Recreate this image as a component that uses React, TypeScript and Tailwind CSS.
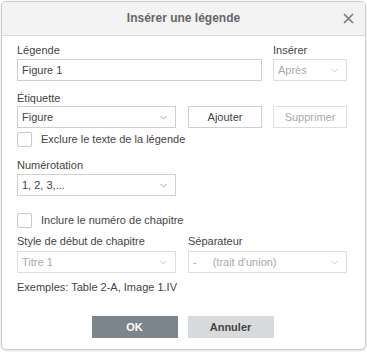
import React from "react";

const font = { fontFamily: '"Liberation Sans", Arial, sans-serif' };

function Chevron({ disabled }: { disabled?: boolean }) {
  return (
    <svg width="7" height="5" viewBox="0 0 7 5" className="shrink-0">
      <path d="M0.5 1 L3.5 4 L6.5 1" fill="none" stroke={disabled ? "#c4c4c4" : "#9a9a9a"} strokeWidth="0.9" />
    </svg>
  );
}

function Select({ value, width, disabled }: { value: React.ReactNode; width: string; disabled?: boolean }) {
  return (
    <div
      className={`${width} flex h-[22px] items-center justify-between border pl-[4px] pr-[8px] ${
        disabled ? "border-[#dedede] text-[#a9a9a9]" : "border-[#cfcfcf] text-[#444]"
      }`}
    >
      <span>{value}</span>
      <Chevron disabled={disabled} />
    </div>
  );
}

function Checkbox({ label }: { label: string }) {
  return (
    <label className="flex h-[15px] items-center gap-[9px]">
      <span className="h-[15px] w-[15px] rounded-[2px] border border-[#c8c8c8] bg-white" />
      <span>{label}</span>
    </label>
  );
}

export default function App() {
  return (
    <div className="h-[352px] w-[367px] bg-white p-px" style={font}>
      <div className="flex h-[349px] w-[365px] flex-col overflow-hidden rounded-[5px] border border-[#cbcbcb] bg-white text-[11px] leading-[13px] text-[#444] shadow-[0_1px_3px_rgba(0,0,0,0.12)]">
        <div className="relative flex h-[34px] shrink-0 items-center justify-center border-b border-[#dadada] bg-[#f3f3f3]">
          <span className="text-[12px] font-bold text-[#666]">Insérer une légende</span>
          <svg width="11" height="11" viewBox="0 0 11 11" className="absolute right-[11px] top-[11px]">
            <path d="M1 1 L10 10 M10 1 L1 10" stroke="#777" strokeWidth="1.6" />
          </svg>
        </div>

        <div className="flex flex-col px-[15px] pt-[8px]">
          <div className="flex gap-[11px]">
            <div className="flex flex-col gap-[2px]">
              <span>Légende</span>
              <div className="flex h-[22px] w-[245px] items-center border border-[#cfcfcf] px-[4px]">Figure 1</div>
            </div>
            <div className="flex flex-col gap-[2px]">
              <span>Insérer</span>
              <Select value="Après" width="w-[74px]" disabled />
            </div>
          </div>

          <span className="mt-[11px]">Étiquette</span>
          <div className="mt-[1px] flex gap-[12px]">
            <Select value="Figure" width="w-[159px]" />
            <div className="flex h-[22px] w-[74px] items-center justify-center border border-[#cfcfcf]">Ajouter</div>
            <div className="ml-[-1px] flex h-[22px] w-[74px] items-center justify-center border border-[#e0e0e0] text-[#a9a9a9]">
              Supprimer
            </div>
          </div>

          <div className="mt-[4px]">
            <Checkbox label="Exclure le texte de la légende" />
          </div>

          <span className="mt-[12px]">Numérotation</span>
          <div className="mt-[2px]">
            <Select value="1, 2, 3,..." width="w-[159px]" />
          </div>

          <div className="mt-[17px]">
            <Checkbox label="Inclure le numéro de chapitre" />
          </div>

          <div className="mt-[7px] flex gap-[12px]">
            <div className="flex w-[159px] flex-col gap-[3px]">
              <span>Style de début de chapitre</span>
              <Select value="Titre 1" width="w-[159px]" disabled />
            </div>
            <div className="flex w-[159px] flex-col gap-[3px]">
              <span>Séparateur</span>
              <Select
                value={
                  <span>
                    -<span className="ml-[16px]">(trait d'union)</span>
                  </span>
                }
                width="w-[159px]"
                disabled
              />
            </div>
          </div>

          <span className="mt-[8px]">Exemples: Table 2-A, Image 1.IV</span>

          <div className="mt-[22px] flex justify-center gap-[10px] pr-[2px]">
            <button className="h-[22px] w-[86px] bg-[#7c858c] font-bold text-white">OK</button>
            <button className="h-[22px] w-[86px] bg-[#d8dadc] font-bold text-[#444]">Annuler</button>
          </div>
        </div>
      </div>
    </div>
  );
}
